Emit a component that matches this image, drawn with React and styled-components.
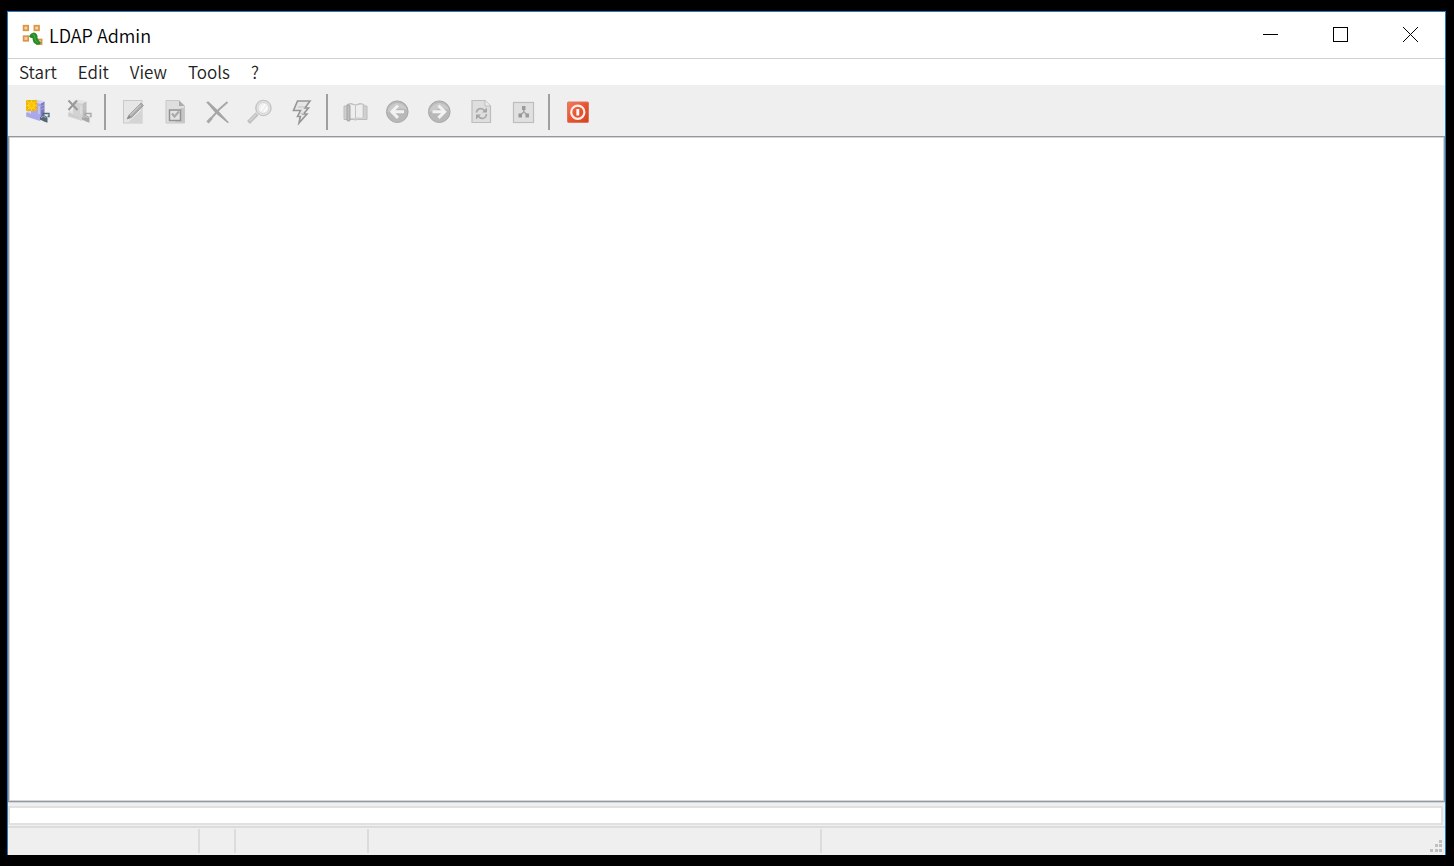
import React from "react";
import styled, { createGlobalStyle } from "styled-components";

const GlobalStyle = createGlobalStyle`
  *, *::before, *::after { box-sizing: border-box; }
  body { margin: 0; background: #000; }
`;

const Desktop = styled.div`
  display: flex;
  min-height: 100vh;
  padding: 11px 8px 11px 7px;
  background: #000;
  font-family: "Noto Sans CJK KR", "Noto Sans", sans-serif;
`;

const Window = styled.div`
  display: flex;
  flex: 1;
  flex-direction: column;
  min-width: 0;
  border: 1px solid #1c7ac6;
  border-bottom: 0;
  background: #efefef;
`;

const TitleBar = styled.header`
  display: flex;
  align-items: center;
  height: 47px;
  padding-left: 14px;
  gap: 5px;
  border-bottom: 1px solid #d0d0d0;
  background: #fff;
`;

const Title = styled.h1`
  flex: 1;
  margin: 0;
  color: #000;
  font-family: "Noto Sans CJK KR", "Noto Sans", sans-serif;
  font-size: 18px;
  font-weight: 350;
  line-height: 24px;
`;

const CaptionButtons = styled.div`
  display: flex;
  height: 100%;
`;

const CaptionButton = styled.button`
  display: grid;
  place-items: center;
  width: 70px;
  padding: 0 0 2px;
  border: 0;
  background: transparent;
`;

const MenuBar = styled.nav`
  display: flex;
  height: 26px;
  padding-left: 11px;
  gap: 21px;
  background: #fff;
`;

const MenuItem = styled.button`
  padding: 0;
  border: 0;
  background: transparent;
  color: #222;
  font-family: inherit;
  font-size: 17px;
  font-weight: 350;
  line-height: 26px;
`;

const Toolbar = styled.div`
  display: flex;
  align-items: center;
  height: 51px;
  padding: 2px 8px 0;
`;

const ToolButton = styled.button`
  display: grid;
  place-items: center;
  width: 42px;
  height: 42px;
  padding: 0;
  border: 0;
  background: transparent;
`;

const ToolSeparator = styled.div`
  width: 2px;
  height: 36px;
  margin: 0 6px 0 4px;
  background: #a0a0a0;
`;

const Workspace = styled.main`
  flex: 1;
  border: 1px solid #94989e;
  background: #fff;
  box-shadow: inset 0 0 0 1px #d3d6d9, 0 1px 0 #d3d6d9;
`;

const LogPane = styled.section`
  height: 19px;
  margin: 4px 2px 1px 0;
  border: 2px solid #e1e1e1;
  background: #fff;
`;

const StatusBar = styled.footer`
  display: flex;
  height: 29px;
  padding: 1px 2px 2px 0;
  border-top: 2px solid #dcdcdc;
`;

const StatusPanel = styled.div`
  flex: 0 0 ${(p) => p.$width}px;
  border-right: 2px solid #dcdcdc;
`;

const StatusFill = styled.div`
  display: flex;
  flex: 1;
  align-items: flex-end;
  justify-content: flex-end;
`;

const Glyph = styled.svg`
  display: block;
`;

function AppLogo() {
  return (
    <Glyph width="22" height="22" viewBox="0 0 22 22" aria-hidden="true">
      <g fill="#f7d49b" stroke="#d9954a" strokeWidth="1.7">
        <rect x="1.6" y="1.7" width="4.6" height="4.6" />
        <rect x="12.4" y="1.7" width="4.6" height="4.6" />
        <rect x="1.6" y="12.2" width="4.6" height="4.6" />
        <rect x="15" y="15.5" width="4.6" height="4.6" />
      </g>
      <path d="M7 12.5 Q8.5 9 12 8.5 Q16 9.5 15.5 14 Q16.5 17 19 18.5 Q18 21.5 14.5 20.5 Q10.5 19 10.5 14 Q9 14.5 7 12.5 Z" fill="#25892a" />
      <path d="M10.5 10.5 Q13 11 13 15 Q13.5 17.5 16 19" fill="none" stroke="#4aab3a" strokeWidth="1.2" />
    </Glyph>
  );
}

function Icon({ children }) {
  return (
    <Glyph width="28" height="28" viewBox="0 0 28 28" fill="none" aria-hidden="true">
      {children}
    </Glyph>
  );
}

function Server({ top, face, side, line, plug }) {
  return (
    <>
      <path d="M3.5 14 L9 12 L17 15 L17 23 L3 18.5 Z" fill={face} />
      <path d="M3.5 14 L9 12 L17 15 L13.5 18 Z" fill={top} />
      <path d="M3.5 16.2 L14 19.8" stroke={line} strokeWidth="1" />
      <path d="M8 3.5 L17.5 5.5 V22.5 L13 19 L8 16 Z" fill={face} />
      <path d="M17.5 5.5 L21.5 3.5 V17.5 L17.5 22.5 Z" fill={side} />
      <path d="M8 3.5 L13 1.5 L21.5 3.2 L17.5 5.7 Z" fill={top} />
      <path d="M16 8 V16" stroke={top} strokeWidth="1.2" />
      <path d="M18 8.5 L21 7 M18 11.5 L21 10" stroke={line} strokeWidth="1" />
      <path d="M20 17.5 V15.5 H26 V18.5 H24.5" stroke={plug} strokeWidth="1.3" />
      <path d="M17 19.5 L20 17.2 L23 18 L24.5 20 V24.8 L21 23.5 L17 21.5 Z" fill={plug} />
      <path d="M18 19.7 L20.5 18.4 L23 19.5" stroke={line} strokeWidth="1" />
    </>
  );
}

function ConnectIcon() {
  return (
    <Icon>
      <Server top="#d3d2f4" face="#aaa8ed" side="#7c79c5" line="#a9a9cf" plug="#506775" />
      <rect x="3" y="2" width="11" height="11" rx="1" fill="#f3b500" />
      <circle cx="8.5" cy="7.5" r="3" fill="#ffc400" stroke="#ffda3d" />
      <path d="M8.5 2.5 V4 M8.5 11 V12.5 M3.5 7.5 H5 M12 7.5 H13.5 M4.5 3.5 L6 5 M12.5 3.5 L11 5 M4.5 11.5 L6 10 M12.5 11.5 L11 10" stroke="#ffd83a" />
    </Icon>
  );
}

function DisconnectIcon() {
  return (
    <Icon>
      <Server top="#e3e3e3" face="#d2d2d2" side="#bebebe" line="#c8c8c8" plug="#a8a8a8" />
      <path d="M3.5 2.5 L12.5 12 M12 2.5 L3.5 12" stroke="#999" strokeWidth="2" />
    </Icon>
  );
}

function EditEntryIcon() {
  return (
    <Icon>
      <rect x="4.5" y="2.5" width="18.5" height="22.5" fill="#e6e6e6" stroke="#c9c9c9" />
      <path d="M9 24.5 L22.5 12 V24.5 Z" fill="#d4d4d4" />
      <path d="M8 21 L10 17 L22 5 L24.5 7.5 L12.5 19.5 Z" fill="#aaa" stroke="#989898" strokeWidth=".8" />
      <path d="M11 17.5 L21.5 7" stroke="#c6c6c6" strokeWidth="1.3" />
      <path d="M8 21 L10 17.5 L12 19 Z" fill="#888" />
    </Icon>
  );
}

function PropertiesIcon() {
  return (
    <Icon>
      <path d="M5 2.5 H18 L23.5 8 V25 H5 Z" fill="#dedede" stroke="#c8c8c8" />
      <path d="M18 2.5 L23.5 8 H18 Z" fill="#aaa" />
      <path d="M19.5 10 H23 V24.5 H13 L19.5 21 Z" fill="#c5c5c5" />
      <rect x="8.5" y="12" width="11" height="10.5" fill="#e3e3e3" stroke="#929292" strokeWidth="1.5" />
      <path d="M11 15.5 L13.5 18.5 L18 13.5" stroke="#aaa" strokeWidth="2.3" />
    </Icon>
  );
}

function DeleteIcon() {
  return (
    <Icon>
      <path d="M3 4 L5.5 3.5 L15 12.5 L26 24.5 L24.5 25 L13 15.5 Z" fill="#a5a5a5" />
      <path d="M24.5 4 L16 11.5 L5 24" stroke="#a8a8a8" strokeWidth="2" />
      <path d="M8.5 20 L4.5 24.5" stroke="#a8a8a8" strokeWidth="3" />
    </Icon>
  );
}

function SearchIcon() {
  return (
    <Icon>
      <path d="M3.5 24.5 L12 16" stroke="#bebebe" strokeWidth="4" />
      <path d="M4.5 23 L11 16.5" stroke="#d6d6d6" strokeWidth="1.5" />
      <circle cx="18.4" cy="10" r="7.6" fill="#e5e5e5" stroke="#c3c3c3" strokeWidth="1.4" />
      <circle cx="18.4" cy="10" r="5.5" fill="#f0f0f0" stroke="#d5d5d5" />
      <path d="M15.5 12.5 L20 6 M19 14 L22.5 9" stroke="#fff" strokeWidth="1.2" />
    </Icon>
  );
}

function LightningIcon() {
  return (
    <Icon>
      <path d="M10.5 3 H23 L18 10 H21.5 L16.5 16 H20 L12 25 L13.3 18.5 H10.5 L13.5 12.5 H6.5 Z" fill="#e6e6e6" stroke="#969696" strokeWidth="1.6" />
      <path d="M11 9 H18 M14 15.5 H17" stroke="#c3c3c3" />
    </Icon>
  );
}

function BookIcon() {
  return (
    <Icon>
      <path d="M3 8 H6 V6.5 L10 5.5 L14.5 7 L19 5.5 L23 6.5 V8 H26 V21.5 H16.5 L14.5 22 L12.5 21.5 H3 Z" fill="#d0d0d0" stroke="#bcbcbc" />
      <path d="M8.5 6.5 L14 7.5 V20 H8.5 Z M15 7.5 L21.5 6.5 V19.5 H15 Z" fill="#eee" />
      <path d="M14.5 7 V20 M22.5 8 V19.5" stroke="#c3c3c3" />
      <rect x="6" y="7" width="3" height="16" rx="1" fill="#bebebe" stroke="#a3a3a3" />
    </Icon>
  );
}

function ArrowIcon({ forward }) {
  return (
    <Icon>
      <circle cx="14.3" cy="13.7" r="10.8" fill="#b8b8b8" stroke="#a8a8a8" />
      <path d="M4.5 14 A10 10 0 0 1 24 12 Q18 8 4.5 14" fill="#cacaca" />
      {forward ? (
        <path d="M7.5 13.7 H19 M13.5 7.5 L19.7 13.7 L13.5 19.9" stroke="#f2f2f2" strokeWidth="3" />
      ) : (
        <path d="M21 13.7 H9.5 M15 7.5 L8.8 13.7 L15 19.9" stroke="#f2f2f2" strokeWidth="3" />
      )}
    </Icon>
  );
}

function RefreshIcon() {
  return (
    <Icon>
      <path d="M5 2.5 H18 L23.5 8 V24.5 H5 Z" fill="#dedede" stroke="#bdbdbd" strokeWidth="1.2" />
      <path d="M18 2.5 V8 H23.5" fill="#ececec" stroke="#bdbdbd" />
      <path d="M9.5 14.5 C10 9.5 15.5 9.5 18 13 M19.5 16 C19 21.5 13.5 21.5 11 18" stroke="#aaa" strokeWidth="1.7" />
      <path d="M15 14.5 H20 V9.5 Z M9 16.5 H14 L9 21.5 Z" fill="#a5a5a5" />
    </Icon>
  );
}

function SchemaIcon() {
  return (
    <Icon>
      <rect x="4.5" y="4.5" width="20" height="20" fill="#e0e0e0" stroke="#bdbdbd" strokeWidth="1.2" />
      <path d="M14.8 10 V14 L11.5 17 M14.8 14 L18.5 17" stroke="#a5a5a5" strokeWidth="1.6" />
      <rect x="13" y="8" width="3.5" height="4" fill="#9c9c9c" />
      <rect x="9.5" y="15.5" width="3.5" height="4" fill="#969696" />
      <rect x="16.5" y="15.5" width="3.5" height="4" fill="#9c9c9c" />
    </Icon>
  );
}

function PowerIcon() {
  return (
    <Icon>
      <defs>
        <linearGradient id="power" x1="0" y1="0" x2="1" y2="1">
          <stop offset="0" stopColor="#f37b60" />
          <stop offset=".5" stopColor="#e85432" />
          <stop offset="1" stopColor="#d64120" />
        </linearGradient>
      </defs>
      <rect x="4.5" y="4" width="21" height="20.5" rx="1" fill="url(#power)" stroke="#dc7860" />
      <circle cx="14.8" cy="14.2" r="6.6" stroke="#fff0ea" strokeWidth="2.2" />
      <path d="M14.8 11 V17.5" stroke="#fff" strokeWidth="2.8" />
    </Icon>
  );
}

const menus = ["Start", "Edit", "View", "Tools", "?"];

const toolGroups = [
  [
    ["Connect", <ConnectIcon />],
    ["Disconnect", <DisconnectIcon />, true],
  ],
  [
    ["Edit entry", <EditEntryIcon />, true],
    ["Properties", <PropertiesIcon />, true],
    ["Delete", <DeleteIcon />, true],
    ["Search", <SearchIcon />, true],
    ["Modify", <LightningIcon />, true],
  ],
  [
    ["Bookmarks", <BookIcon />, true],
    ["Back", <ArrowIcon />, true],
    ["Forward", <ArrowIcon forward />, true],
    ["Refresh", <RefreshIcon />, true],
    ["Schema", <SchemaIcon />, true],
  ],
  [["Exit", <PowerIcon />]],
];

const statusWidths = [192, 36, 133, 453];

export default function App() {
  return (
    <Desktop>
      <GlobalStyle />
      <Window>
        <TitleBar>
          <AppLogo />
          <Title>LDAP Admin</Title>
          <CaptionButtons>
            <CaptionButton aria-label="Minimize">
              <Glyph width="15" height="15" shapeRendering="crispEdges">
                <path d="M0 7.5 H15" stroke="#000" />
              </Glyph>
            </CaptionButton>
            <CaptionButton aria-label="Maximize">
              <Glyph width="15" height="15" shapeRendering="crispEdges">
                <path d="M.5 .5 H14.5 V14.5 H.5 Z" fill="none" stroke="#000" />
              </Glyph>
            </CaptionButton>
            <CaptionButton aria-label="Close">
              <Glyph width="15" height="15">
                <path d="M0 0 L15 15 M15 0 L0 15" stroke="#000" />
              </Glyph>
            </CaptionButton>
          </CaptionButtons>
        </TitleBar>
        <MenuBar aria-label="Main menu">
          {menus.map((name) => (
            <MenuItem key={name}>{name}</MenuItem>
          ))}
        </MenuBar>
        <Toolbar role="toolbar" aria-label="Tools">
          {toolGroups.map((group, index) => (
            <React.Fragment key={index}>
              {index > 0 && <ToolSeparator />}
              {group.map(([name, icon, disabled]) => (
                <ToolButton key={name} aria-label={name} disabled={disabled}>
                  {icon}
                </ToolButton>
              ))}
            </React.Fragment>
          ))}
        </Toolbar>
        <Workspace />
        <LogPane />
        <StatusBar>
          {statusWidths.map((width) => (
            <StatusPanel key={width} $width={width} />
          ))}
          <StatusFill>
            <Glyph width="13" height="13" fill="#bfbfbf" shapeRendering="crispEdges" aria-hidden="true">
              <path d="M9 0h3v3h-3z M5 4h3v3h-3z M9 4h3v3h-3z M0 9h3v3h-3z M5 9h3v3h-3z M9 9h3v3h-3z" />
            </Glyph>
          </StatusFill>
        </StatusBar>
      </Window>
    </Desktop>
  );
}
